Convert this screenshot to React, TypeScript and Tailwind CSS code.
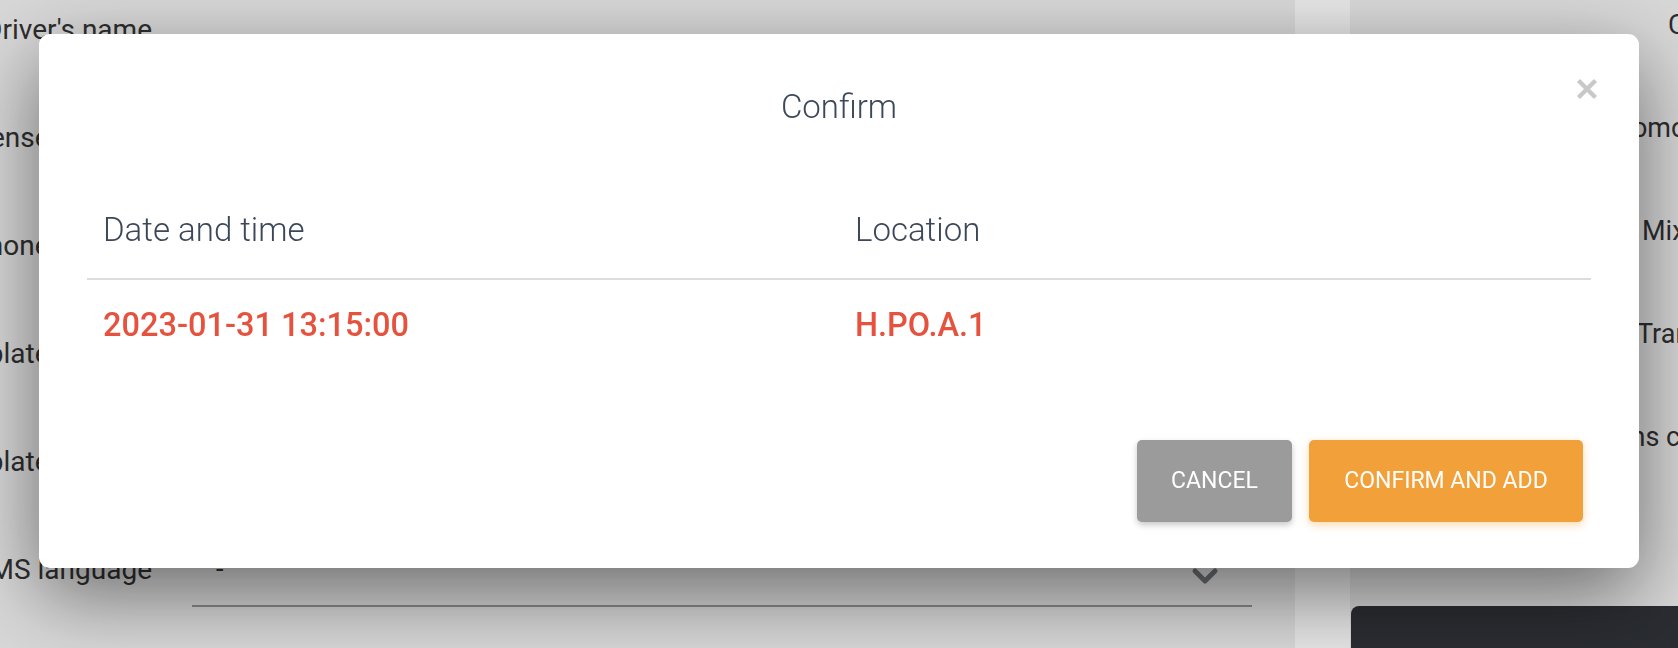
import { ChevronDown } from "lucide-react";

const leftRows = [
  "Driver's name",
  "License number",
  "Phone number",
  "Truck plate number",
  "Trailer plate number",
  "SMS language",
];

const rightRows = [
  { label: "Company", pad: "pl-[318px]" },
  { label: "Promotion", pad: "pl-[256px]" },
  { label: "Mixer", pad: "pl-[292px]" },
  { label: "Transport", pad: "pl-[287px]" },
  { label: "Options cost", pad: "pl-[216px]" },
];

function CloseIcon() {
  return (
    <svg width="24" height="24" viewBox="0 0 24 24" fill="none">
      <path
        d="M3.5 3.5L20.5 20.5M20.5 3.5L3.5 20.5"
        stroke="#c8c8c8"
        strokeWidth="4.4"
      />
    </svg>
  );
}

function ConfirmModal() {
  return (
    <div className="fixed inset-0 bg-black/10">
      <div className="relative mx-auto mt-[34px] w-[1600px] rounded-[11px] bg-white px-12 pt-12 pb-[46px] shadow-[0_26px_80px_rgba(0,0,0,0.5)]">
        <button className="absolute top-[43px] right-[40px]">
          <CloseIcon />
        </button>
        <div className="text-center text-[33px] leading-[50px] font-light text-[#3c4859]">
          Confirm
        </div>
        <div className="mt-[50px]">
          <div className="grid grid-cols-2 border-b-2 border-[#dddddd]">
            <div className="px-4 py-[23px] text-[33px] leading-[50px] font-light text-[#3c4859]">
              Date and time
            </div>
            <div className="px-4 py-[23px] text-[33px] leading-[50px] font-light text-[#3c4859]">
              Location
            </div>
          </div>
          <div className="grid grid-cols-2">
            <div className="px-4 py-5 text-[32.5px] leading-[50px] font-medium text-[#e5533f]">
              2023-01-31 13:15:00
            </div>
            <div className="px-4 py-5 text-[32.5px] leading-[50px] font-medium text-[#e5533f]">
              H.PO.A.1
            </div>
          </div>
        </div>
        <div className="mt-[70px] flex justify-end gap-[17px] pr-2">
          <button className="h-[82px] w-[155px] rounded-[5px] bg-[#9b9b9b] text-[23px] text-white shadow-[0_3px_6px_rgba(0,0,0,0.22)]">
            CANCEL
          </button>
          <button className="h-[82px] w-[274px] rounded-[5px] bg-[#f2a03a] text-[23px] text-white shadow-[0_3px_8px_rgba(242,160,58,0.4)]">
            CONFIRM AND ADD
          </button>
        </div>
      </div>
    </div>
  );
}

export default function App() {
  return (
    <div className="relative flex h-[648px] w-[1678px] overflow-hidden bg-white font-['Roboto',sans-serif] text-[#333333]">
      <div className="w-[1295px] shrink-0 bg-[#f0f0f0]">
        <div className="-mt-[24px] flex flex-col">
          {leftRows.map((label, i) => (
            <div key={label} className="flex h-[108px] items-center">
              <div className="flex w-[152px] shrink-0 justify-end whitespace-nowrap text-[28px]">
                {label}
              </div>
              <div className="relative ml-[40px] flex h-[74px] w-[1060px] items-center border-b-2 border-[#999999] pl-6 text-[27px]">
                {i === leftRows.length - 1 ? "-" : ""}
                {i === leftRows.length - 1 && (
                  <ChevronDown
                    size={40}
                    strokeWidth={3}
                    className="absolute right-[27px] top-[23px] text-[#777b80]"
                  />
                )}
              </div>
            </div>
          ))}
        </div>
      </div>
      <div className="w-[55px] shrink-0 bg-white" />
      <div className="flex flex-1 flex-col bg-[#f0f0f0]">
        <div className="-mt-[26px] flex flex-col">
          {rightRows.map((r) => (
            <div
              key={r.label}
              className={`flex h-[103px] items-center whitespace-nowrap text-[27px] ${r.pad}`}
            >
              {r.label}
            </div>
          ))}
        </div>
        <div className="mt-auto ml-px h-[42px] rounded-tl-[8px] bg-[#2f3237]" />
      </div>
      <ConfirmModal />
    </div>
  );
}
